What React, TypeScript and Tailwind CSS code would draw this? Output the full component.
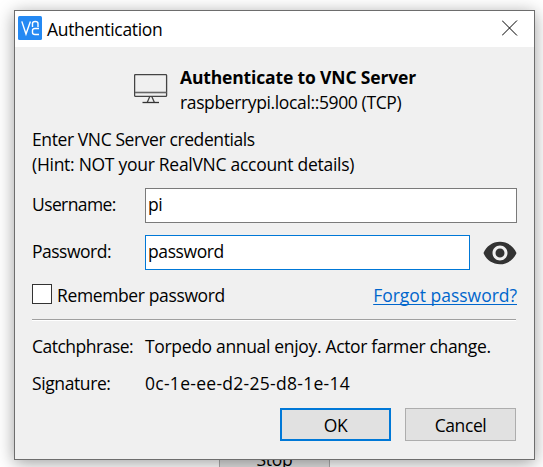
import React from "react";

function Logo() {
  return (
    <svg width="24" height="24" viewBox="0 0 24 24" className="mt-[5px] shrink-0">
      <rect width="24" height="24" rx="1.5" fill="#2489f3" />
      <g fill="none" stroke="#fff" strokeWidth="1.4">
        <path d="M3.8 5.4L8 18L12.4 5.4" />
        <path d="M14.5 11V7.500Q14.500 5.500 17.200 5.500Q20 5.500 20 7.500V11" />
        <path d="M21 12.500H17Q14.500 12.500 14.500 14.500V16.500Q14.500 18.500 17 18.500H21" />
      </g>
    </svg>
  );
}

function Monitor() {
  return (
    <svg width="34" height="30" viewBox="0 0 34 30" className="mt-[27px] shrink-0" fill="none" stroke="#444">
      <rect x="0.6" y="0.6" width="32" height="21.8" rx="1" strokeWidth="1.3" />
      <path d="M1 18.5H32.5" strokeWidth="1.6" stroke="#666" />
      <path d="M15.800 22.500L13.200 28.500M17.800 22.500L20.400 28.500" strokeWidth="1.3" />
      <path d="M8.5 28.5H25" strokeWidth="1.3" stroke="#333" />
    </svg>
  );
}

function Eye() {
  return (
    <svg width="36" height="36" viewBox="0 0 24 24" fill="#333" className="-mr-0.5">
      <path d="M12 4.5C7 4.5 2.73 7.61 1 12c1.73 4.39 6 7.5 11 7.5s9.270-3.110 11-7.5c-1.730-4.390-6-7.500-11-7.500zM12 17c-2.760 0-5-2.240-5-5s2.240-5 5-5 5 2.240 5 5-2.240 5-5 5zm0-8c-1.660 0-3 1.340-3 3s1.340 3 3 3 3-1.340 3-3-1.340-3-3-3z" />
    </svg>
  );
}

export default function App() {
  return (
    <div className="relative h-[467px] w-[543px] overflow-hidden bg-white font-['Open_Sans','Noto_Sans',sans-serif] text-[17.5px] leading-[25px] whitespace-nowrap text-black">
      <div className="absolute top-[443px] left-[219px] flex h-[34px] w-[111px] justify-center border border-[#adadad] bg-[#e1e1e1] pt-[3px]">
        <span className="tracking-[-0.3px]">Stop</span>
      </div>
      <div className="relative mt-[10px] ml-[14px] flex h-[450px] w-[521px] flex-col border border-[#6d6d6d] bg-[#f0f0f0] shadow-[0_3px_16px_rgba(0,0,0,0.38)]">
        <header className="flex h-9 shrink-0 bg-white pr-4 pl-[3px]">
          <Logo />
          <span className="mt-[6px] ml-[5px] tracking-[-0.33px]">Authentication</span>
          <svg width="16" height="16" viewBox="0 0 16 16" className="mt-[9px] ml-auto" stroke="#000" strokeWidth="1">
            <path d="M0 0.5L15 15.5M15 0.5L0 15.5" />
          </svg>
        </header>
        <main className="flex flex-col pr-[17px] pl-[17px]">
          <div className="flex gap-3 pl-[102px]">
            <Monitor />
            <div className="mt-[18px] flex flex-col">
              <span className="font-bold tracking-[-0.15px]">Authenticate to VNC Server</span>
              <span className="tracking-[-0.37px]">raspberrypi.local::5900 (TCP)</span>
            </div>
          </div>
          <div className="mt-3 flex flex-col">
            <span className="tracking-[-0.4px]">Enter VNC Server credentials</span>
            <span className="tracking-[-0.28px]">(Hint: NOT your RealVNC account details)</span>
          </div>
          <div className="mt-[11px] flex h-[35px] items-center">
            <span className="-mt-0.5 w-[113px] tracking-[-0.6px]">Username:</span>
            <div className="flex h-full w-[372px] items-center border border-[#7a7a7a] bg-white pb-0.5 pl-[2px]">
              <span className="tracking-[-0.4px]">pi</span>
            </div>
          </div>
          <div className="mt-3 flex h-[35px] items-center">
            <span className="-mt-0.5 w-[113px] tracking-[-0.5px]">Password:</span>
            <div className="flex h-full w-[325px] items-center border border-[#0078d7] bg-white pb-0.5 pl-[2px]">
              <span className="tracking-[-0.4px]">password</span>
            </div>
            <div className="ml-[11.5px]"><Eye /></div>
          </div>
          <div className="mt-[14px] flex h-5 items-center">
            <span className="h-5 w-5 border border-[#333] bg-white" />
            <span className="mt-0.5 ml-[5px] tracking-[-0.37px]">Remember password</span>
            <span className="mt-0.5 ml-auto tracking-[-0.02px] text-[#0066cc] underline decoration-1 underline-offset-2 [text-decoration-skip-ink:none]">Forgot password?</span>
          </div>
          <div className="mt-[15px] h-[2px] w-[484px] border-t border-b border-t-[#a0a0a0] border-b-white" />
          <div className="mt-[13px] flex">
            <span className="w-[113px] tracking-[-0.5px]">Catchphrase:</span>
            <span className="tracking-[-0.33px]">Torpedo annual enjoy. Actor farmer change.</span>
          </div>
          <div className="mt-3 flex">
            <span className="w-[113px] tracking-[-0.4px]">Signature:</span>
            <span className="tracking-[0.28px]">0c-1e-ee-d2-25-d8-1e-14</span>
          </div>
          <div className="mt-3 flex gap-[14px] pl-[248px]">
            <button className="h-[33px] w-[111px] border-2 border-[#0078d7] bg-[#e1e1e1] pt-0.5 tracking-[-0.4px]">OK</button>
            <button className="h-[33px] w-[111px] border border-[#adadad] bg-[#e1e1e1] pt-0.5 tracking-[-0.4px]">Cancel</button>
          </div>
        </main>
      </div>
    </div>
  );
}
